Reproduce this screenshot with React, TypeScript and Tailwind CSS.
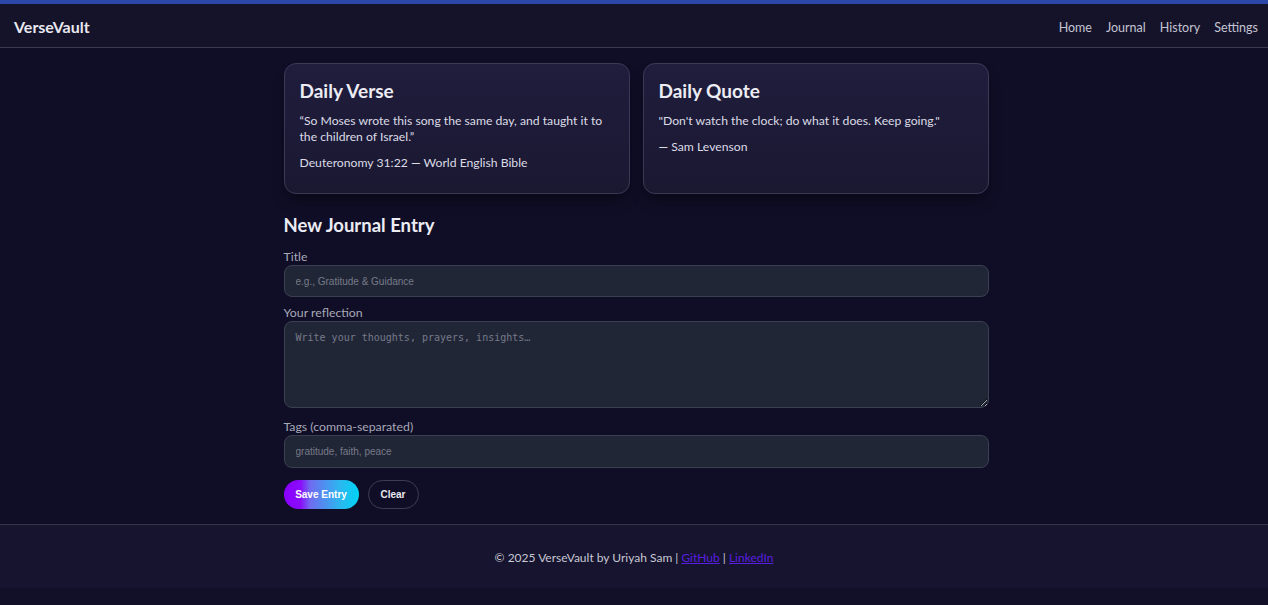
import { useState } from "react";

type Entry = {
  title: string;
  body: string;
  tags: string;
};

const empty: Entry = { title: "", body: "", tags: "" };

const Header = () => (
  <header className="border-t-4 border-[#2b47a8] bg-[#15132a] border-b border-b-[#3a3b52]">
    <div className="flex h-[43px] items-center justify-between px-[14px] pr-[10px]">
      <span className="mt-[2px] text-[16px] font-bold text-[#e8e8f0]">VerseVault</span>
      <nav className="mt-[5px] flex gap-[14px] text-[12.5px] text-[#c4c4d2]">
        <a href="#">Home</a>
        <a href="#">Journal</a>
        <a href="#">History</a>
        <a href="#">Settings</a>
      </nav>
    </div>
  </header>
);

const Card = ({ title, children }: { title: string; children: React.ReactNode }) => (
  <div className="h-[131px] rounded-xl border border-[#3a3a56] bg-gradient-to-b from-[#201d3d] to-[#1a1831] px-[15px] pt-[15px] shadow-lg shadow-black/30">
    <h2 className="mb-[10px] text-[19px] leading-[24px] font-bold text-[#ececf4]">{title}</h2>
    <div className="text-[12.2px] leading-[16px] text-[#dcdce6]">{children}</div>
  </div>
);

const App = () => {
  const [entry, setEntry] = useState<Entry>(empty);

  const handleChange = (
    e: React.ChangeEvent<HTMLInputElement | HTMLTextAreaElement>
  ) => {
    setEntry({ ...entry, [e.target.name]: e.target.value });
  };

  const fieldClass =
    "w-full rounded-lg border border-[#3b4050] bg-[#212637] px-[11px] text-[10px] text-[#e5e7eb] outline-none placeholder:text-[#767a88]";

  return (
    <div className="flex min-h-[605px] flex-col bg-[#100e26] font-['Lato',sans-serif]">
      <Header />

      <main className="mx-auto w-[705px] translate-x-[2px] pt-[15px] pb-[15px]">
        <div className="grid grid-cols-2 gap-[13px]">
          <Card title="Daily Verse">
            <p>“So Moses wrote this song the same day, and taught it to the children of Israel.”</p>
            <p className="mt-[10px]">Deuteronomy 31:22 — World English Bible</p>
          </Card>
          <Card title="Daily Quote">
            <p>"Don't watch the clock; do what it does. Keep going."</p>
            <p className="mt-[10px]">— Sam Levenson</p>
          </Card>
        </div>

        <h2 className="mt-[19px] text-[18.5px] leading-[24px] font-bold text-[#ececf4]">New Journal Entry</h2>

        <div className="mt-[12px] flex flex-col">
          <label className="text-[12.3px] leading-[16px] text-[#a6a8b8]">Title</label>
          <input
            name="title"
            value={entry.title}
            onChange={handleChange}
            placeholder="e.g., Gratitude & Guidance"
            className={fieldClass + " h-[32px] font-['Liberation_Sans',sans-serif]"}
          />

          <label className="mt-[8px] text-[12.3px] leading-[16px] text-[#a6a8b8]">Your reflection</label>
          <textarea
            name="body"
            value={entry.body}
            onChange={handleChange}
            placeholder="Write your thoughts, prayers, insights…"
            className={fieldClass + " h-[87px] py-[8px] font-['DejaVu_Sans_Mono',monospace]"}
          />

          <label className="mt-[11px] text-[12.3px] leading-[16px] text-[#a6a8b8]">Tags (comma-separated)</label>
          <input
            name="tags"
            value={entry.tags}
            onChange={handleChange}
            placeholder="gratitude, faith, peace"
            className={fieldClass + " h-[33px] font-['Liberation_Sans',sans-serif]"}
          />

          <div className="mt-[12px] flex gap-[9px] font-['Liberation_Sans',sans-serif]">
            <button
              onClick={() => setEntry(empty)}
              className="h-[29px] w-[75px] rounded-full bg-[linear-gradient(90deg,#8a00ff_0%,#8a0cfa_22%,#6f6cf0_35%,#2bb8ef_75%,#00d4f5_100%)] text-[10px] font-bold text-white"
            >
              Save Entry
            </button>
            <button
              onClick={() => setEntry(empty)}
              className="h-[29px] w-[51px] rounded-full border border-[#3c3d54] bg-transparent text-[10px] font-bold text-[#e8e8f0]"
            >
              Clear
            </button>
          </div>
        </div>
      </main>

      <footer className="h-[64px] border-t border-[#33344a] bg-[#16142e] pt-[24px] text-center text-[12px] text-[#c8c8d4]">
        © 2025 VerseVault by Uriyah Sam |{" "}
        <a href="#" className="text-[#5a1ee0] underline">GitHub</a> |{" "}
        <a href="#" className="text-[#5a1ee0] underline">LinkedIn</a>
      </footer>
      <div className="flex-1 bg-[#121028]" />
    </div>
  );
};

export default App;
